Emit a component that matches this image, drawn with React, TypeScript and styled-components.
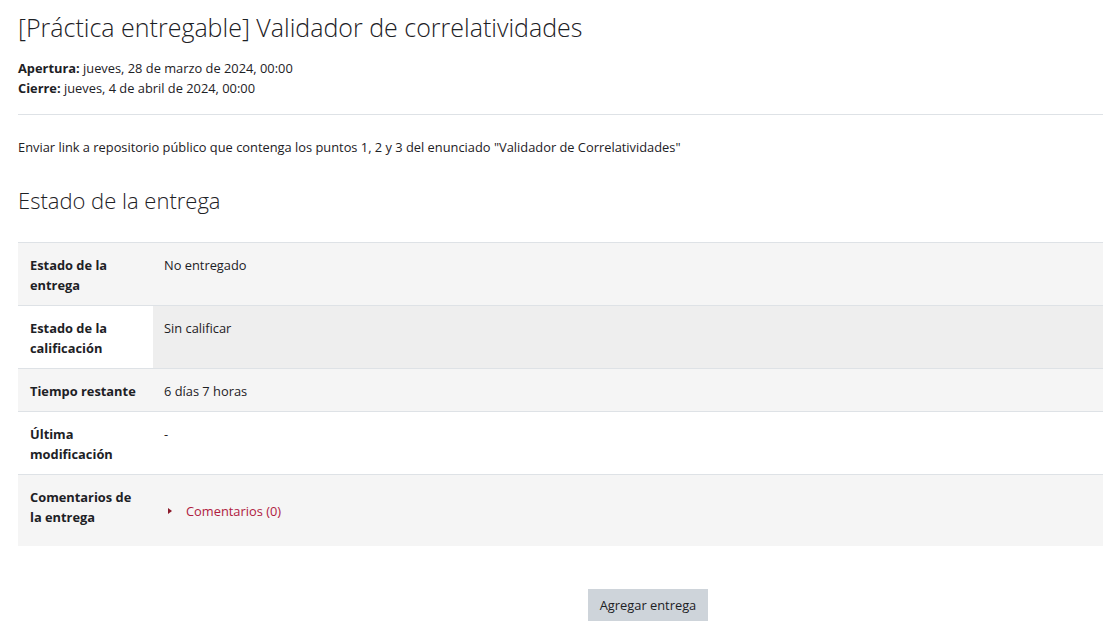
import React from "react";
import styled, { createGlobalStyle } from "styled-components";

const Global = createGlobalStyle`
  html, body { margin: 0; padding: 0; background: #fff; }
  body {
    font-family: "Open Sans", "Noto Sans", sans-serif;
    font-size: 12.85px;
    color: #1d2125;
  }
`;

const Page = styled.div`
  padding: 8px 0 0 18px;
  overflow: hidden;
  width: 1103px;
  height: 630px;
  box-sizing: border-box;
`;

const Title = styled.h1`
  margin: 0;
  font-size: 25px;
  font-weight: 300;
  line-height: 38px;
`;

const Dates = styled.div`
  margin-top: 12px;
  line-height: 20px;
`;

const Rule = styled.hr`
  border: 0;
  border-top: 1px solid #dee2e6;
  margin: 16px 0 0 0;
  width: 1100px;
`;

const Intro = styled.p`
  margin: 22px 0 0 0;
  line-height: 20px;
`;

const SectionTitle = styled.h2`
  margin: 28px 0 0 0;
  font-size: 22px;
  font-weight: 300;
  line-height: 30px;
`;

const Table = styled.table`
  margin-top: 27px;
  width: 1100px;
  border-collapse: collapse;
`;

const Row = styled.tr<{ $striped?: boolean }>`
  background: ${(p) => (p.$striped ? "#f5f5f5" : "#fff")};
  border-top: 1px solid #dee2e6;
`;

const Label = styled.th<{ $tall?: boolean }>`
  width: 111px;
  padding: 12px 12px ${(p) => (p.$tall ? "19px" : "10px")} 12px;
  text-align: left;
  vertical-align: top;
  font-weight: 700;
  line-height: 20px;
`;

const Value = styled.td<{ $hover?: boolean; $middle?: boolean }>`
  padding: 12px 11px 10px 11px;
  vertical-align: ${(p) => (p.$middle ? "middle" : "top")};
  line-height: 20px;
  background: ${(p) => (p.$hover ? "#eeeeee" : "transparent")};
`;

const CommentLink = styled.a`
  display: inline-flex;
  align-items: center;
  gap: 14px;
  margin-bottom: 4px;
  color: #b0203f;
  text-decoration: none;
  padding-left: 4px;
`;

const Caret = styled.span`
  width: 0;
  height: 0;
  border-top: 3.5px solid transparent;
  border-bottom: 3.5px solid transparent;
  border-left: 4px solid #8b1a2b;
`;

const Actions = styled.div`
  display: flex;
  justify-content: center;
  margin-top: 43px;
  width: 1260px;
`;

const Button = styled.button`
  background: #ced4da;
  border: 0;
  color: #1d2125;
  font-family: inherit;
  font-size: 12.85px;
  padding: 6px 12px;
  line-height: 20px;
  height: 32px;
`;

export default function App() {
  return (
    <Page>
      <Global />
      <Title>[Práctica entregable] Validador de correlatividades</Title>
      <Dates>
        <div>
          <strong>Apertura:</strong> jueves, 28 de marzo de 2024, 00:00
        </div>
        <div>
          <strong>Cierre:</strong> jueves, 4 de abril de 2024, 00:00
        </div>
      </Dates>
      <Rule />
      <Intro>
        Enviar link a repositorio público que contenga los puntos 1, 2 y 3 del enunciado "Validador de Correlatividades"
      </Intro>
      <SectionTitle>Estado de la entrega</SectionTitle>
      <Table>
        <tbody>
          <Row $striped>
            <Label>Estado de la entrega</Label>
            <Value>No entregado</Value>
          </Row>
          <Row>
            <Label>Estado de la calificación</Label>
            <Value $hover>Sin calificar</Value>
          </Row>
          <Row $striped>
            <Label>Tiempo restante</Label>
            <Value>6 días 7 horas</Value>
          </Row>
          <Row>
            <Label>Última modificación</Label>
            <Value>-</Value>
          </Row>
          <Row $striped>
            <Label $tall>Comentarios de la entrega</Label>
            <Value $middle>
              <CommentLink href="#">
                <Caret />
                Comentarios (0)
              </CommentLink>
            </Value>
          </Row>
        </tbody>
      </Table>
      <Actions>
        <Button>Agregar entrega</Button>
      </Actions>
    </Page>
  );
}
